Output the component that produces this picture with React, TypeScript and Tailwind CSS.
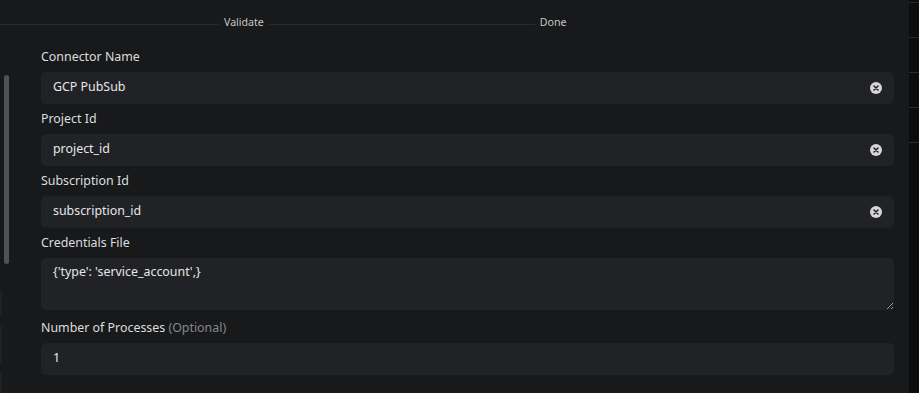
import React from "react";

type Field = { id: string; label: string; value: string; optional?: boolean; multiline?: boolean; clearable?: boolean };

const fields: Field[] = [
  { id: "name", label: "Connector Name", value: "GCP PubSub", clearable: true },
  { id: "project", label: "Project Id", value: "project_id", clearable: true },
  { id: "sub", label: "Subscription Id", value: "subscription_id", clearable: true },
  { id: "creds", label: "Credentials File", value: "{'type': 'service_account',}", multiline: true },
  { id: "procs", label: "Number of Processes", value: "1", optional: true },
];

function ClearIcon() {
  return (
    <svg width="12" height="12" viewBox="0 0 12 12">
      <circle cx="6" cy="6" r="6" fill="#d6d6d6" />
      <path d="M4 4 L8 8 M8 4 L4 8" stroke="#1d1e21" strokeWidth="1.5" strokeLinecap="round" />
    </svg>
  );
}

export default function App() {
  return (
    <div
      className="flex h-[393px] w-[919px] overflow-hidden bg-[#18191b] text-[#d8d9db]"
      style={{ fontFamily: '"Noto Sans", "Open Sans", sans-serif' }}
    >
      {/* left rail with scrollbar */}
      <div className="flex w-[41px] shrink-0 flex-col">
        <div className="ml-[4px] mt-[75px] h-[192px] w-[5px] rounded-full bg-[#505354]" />
        <div className="mt-[26px] h-[27px] w-[2px] bg-[#1f2023]" />
        <div className="mt-[10px] h-[40px] w-[2px] bg-[#1f2023]" />
        <div className="mt-[8px] h-[20px] w-[2px] bg-[#1f2023]" />
      </div>

      <div className="flex min-w-0 flex-1 flex-col">
        {/* stepper header */}
        <div className="-ml-[41px] flex h-[45px] items-start pt-[15px] text-[10.6px] text-[#c4c5c7]">
          <div className="flex h-[14px] items-center">
            <div className="mt-[4px] h-px w-[219px] bg-[#2a2b2e]" />
            <span className="mx-[5px] leading-[14px]">Validate</span>
            <div className="mt-[4px] h-px w-[266px] bg-[#2a2b2e]" />
            <span className="ml-[5px] leading-[14px]">Done</span>
          </div>
        </div>

        {/* form */}
        <div className="mr-[15px] flex flex-col">
          {fields.map((f) => (
            <div key={f.id} className="flex flex-col">
              <label className="h-[24px] text-[12.4px] leading-[23px] text-[#dcdddf]">
                {f.label}
                {f.optional && <span className="text-[#85878a]"> (Optional)</span>}
              </label>
              {f.multiline ? (
                <textarea
                  readOnly
                  value={f.value}
                  className="mb-[6px] mt-[3px] block h-[52px] w-full resize-y rounded-[5px] bg-[#212226] px-3 py-1 text-[12.4px] leading-5 text-[#e6e7e9] outline-none [color-scheme:dark]"
                />
              ) : (
                <div className="mb-[3px] mt-[3px] flex h-8 items-center rounded-[5px] bg-[#212226] pb-px pl-3 pr-3 text-[12.4px] text-[#e6e7e9]">
                  <span className="flex-1">{f.value}</span>
                  {f.clearable && <ClearIcon />}
                </div>
              )}
            </div>
          ))}
        </div>
      </div>

      {/* right dark strip */}
      <div className="flex w-[10px] shrink-0 flex-col bg-[#0b0c0e]">
        <div className="mt-[2px] h-px bg-[#2a2b2f]" />
        <div className="mt-[34px] h-px bg-[#2a2b2f]" />
        <div className="mt-[34px] h-px bg-[#2a2b2f]" />
        <div className="mt-[34px] h-px bg-[#2a2b2f]" />
        <div className="mt-[34px] h-px bg-[#2a2b2f]" />
      </div>
    </div>
  );
}
